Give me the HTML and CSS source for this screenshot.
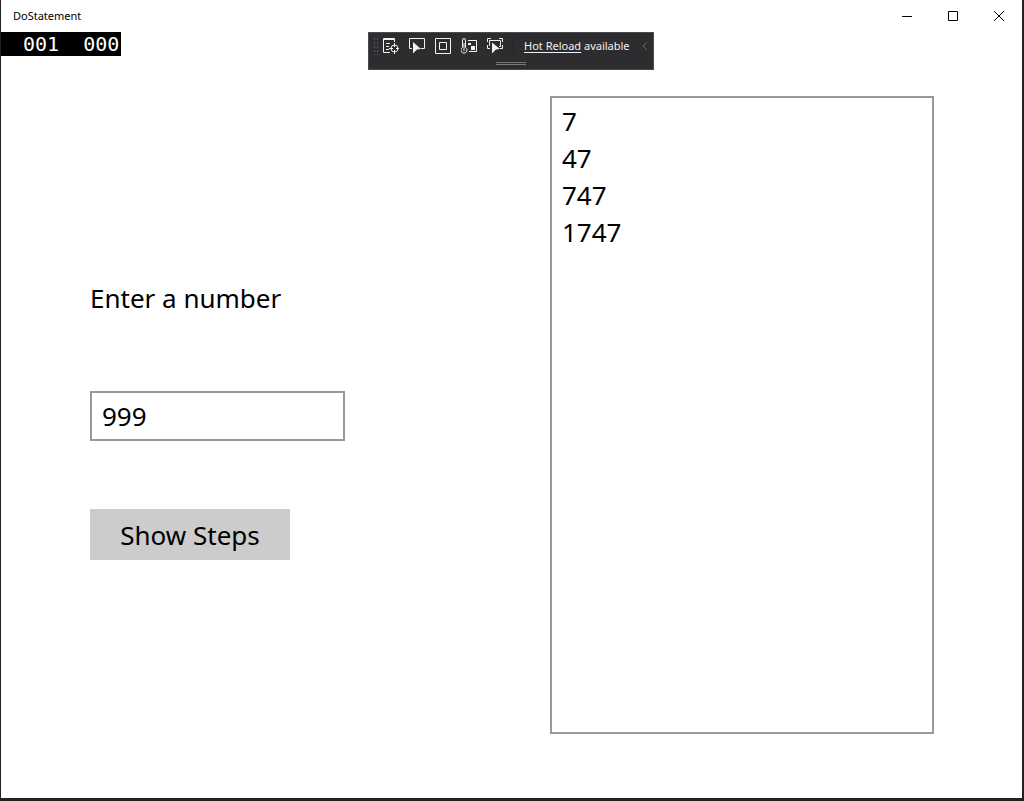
FILE: index.html
```html
<!DOCTYPE html>
<html lang="en">
<head>
<meta charset="utf-8">
<title>DoStatement</title>
<link rel="stylesheet" href="styles.css">
</head>
<body>
<div class="window">
  <header class="titlebar">
    <h1 class="title">DoStatement</h1>
    <button class="caption" aria-label="Minimize"><svg width="10" height="10" viewBox="0 0 10 10"><path d="M0 5.5H10"/></svg></button>
    <button class="caption" aria-label="Maximize"><svg width="10" height="10" viewBox="0 0 10 10"><path d="M.5 .5H9.5V9.5H.5Z"/></svg></button>
    <button class="caption" aria-label="Close"><svg width="10" height="10" viewBox="0 0 10 10"><path d="M0 0L10 10M10 0L0 10"/></svg></button>
  </header>
  <div class="debug">
    <div class="counter"><span>001</span><span>000</span></div>
    <div class="toolbar">
      <div class="tools">
        <span class="grip"></span>
        <button class="tool" aria-label="Go to Live Visual Tree"><svg width="16" height="16" viewBox="0 0 16 16"><path d="M.5 14.500V.5H11.500V4M.5 14.500H7M0 1.500H12M3 5.500H7M3 8.500H6M3 11.500H6M11.500 5V9M11.500 12V16M6 10.500H10M13 10.500H16"/><circle cx="11.500" cy="10.500" r="3.500"/></svg></button>
        <button class="tool" aria-label="Select Element"><svg width="16" height="16" viewBox="0 0 16 16"><path d="M3 10.500H.5V.5H15.500V10.500H12"/><path class="solid" d="M4 4L12 11L8 11.500L4 15.500Z"/></svg></button>
        <button class="tool" aria-label="Display Layout Adorners"><svg width="16" height="16" viewBox="0 0 16 16"><path d="M.5 .5H15.500V15.500H.5ZM4.500 4.500H11.500V11.500H4.500Z"/></svg></button>
        <button class="tool" aria-label="Show Runtime Tools"><svg width="16" height="16" viewBox="0 0 16 16"><path d="M1.500 9.500V2A1.500 1.500 0 0 1 4.500 2V9.500A3 3 0 1 1 1.500 9.500ZM3 5V13M7 2.500H15.500V13.500H8"/><path class="block" d="M7 5H10V7H7ZM10 8H14V12H10Z"/></svg></button>
        <button class="tool" aria-label="Track Focused Element"><svg width="16" height="16" viewBox="0 0 16 16"><path d="M.5 4V.5H4M12 .5H15.500V4M.5 7V10.500H3M15.500 7V10.500H13M2.500 8V2.500H13.500V8.500H12"/><path class="solid" d="M5 4.500L13 11L9 11.500L5 15.500Z"/></svg></button>
        <span class="divider"></span>
        <p class="status"><a href="#reload">Hot Reload</a> available</p>
        <button class="tool collapse" aria-label="Collapse"><svg width="6" height="10" viewBox="0 0 6 10"><path d="M5 1L1 5L5 9"/></svg></button>
      </div>
      <span class="handle"></span>
    </div>
  </div>
  <main class="content">
    <form class="form">
      <label class="label" for="number">Enter a number</label>
      <input class="field" id="number" type="text" value="999">
      <button class="submit" type="button">Show Steps</button>
    </form>
    <textarea class="steps" aria-label="Steps" readonly>7
47
747
1747</textarea>
  </main>
</div>
</body>
</html>
```
FILE: styles.css
```css
* { box-sizing: border-box; }
body { margin: 0; background: #fff; color: #000; font-family: "Noto Sans", sans-serif; }
button { margin: 0; padding: 0; border: 0; background: none; color: inherit; font: inherit; }
svg { display: block; fill: none; stroke: currentColor; }
.window { display: flex; flex-direction: column; min-height: 100vh; border: solid #232124; border-width: 0 2px 3px 1px; }
.titlebar { display: flex; height: 32px; align-items: center; }
.title { flex: 1; margin: 0; padding: 0 0 2px 12px; font-size: 11px; font-weight: 400; }
.caption { display: grid; place-items: center; width: 46px; height: 32px; }
.debug { display: grid; grid-template-columns: 1fr auto 1fr; align-items: start; padding-right: 1px; }
.counter { display: flex; justify-self: start; gap: 24px; padding: 0 2px 0 22px; background: #000; color: #fff; font: 20px/24px "DejaVu Sans Mono", monospace; }
.toolbar { display: flex; flex-direction: column; width: 286px; height: 38px; border: 1px solid #4a4a4e; background: #2d2d30; color: #f1f1f1; }
.tools { display: flex; align-items: center; gap: 10px; height: 26px; padding: 0 5px 0 4px; }
.grip { width: 6px; height: 18px; margin-right: -6px; background: radial-gradient(circle, #55555a 1px, transparent 1px) 0 0 / 3px 4px; }
.tool { flex: none; }
.solid { fill: currentColor; stroke: none; }
.block { fill: currentColor; stroke: none; }
.divider { width: 1px; height: 16px; background: #222224; }
.status { margin: 0; font-size: 11px; line-height: 16px; white-space: nowrap; }
.status a { color: inherit; text-underline-offset: 2px; }
.collapse { margin-left: auto; color: #66666a; }
.handle { align-self: center; width: 30px; height: 3px; margin-top: 3px; border: solid #77777a; border-width: 1px 0; }
.content { display: grid; flex: 1; grid-template-columns: 460fr 384fr; padding: 26px 88px 64px 89px; font-size: 26px; line-height: 37px; }
.form { display: flex; flex-direction: column; align-items: flex-start; padding-top: 184px; }
.label { margin-bottom: 74px; }
.field { width: 255px; height: 50px; margin-bottom: 68px; padding: 0 10px; border: 2px solid #999; background: #fff; color: inherit; font: inherit; }
.submit { width: 200px; height: 51px; padding-top: 2px; background: #ccc; }
.steps { width: 100%; height: 100%; padding: 5px 10px; border: 2px solid #999; resize: none; background: #fff; color: inherit; font: inherit; outline: 0; }
```
